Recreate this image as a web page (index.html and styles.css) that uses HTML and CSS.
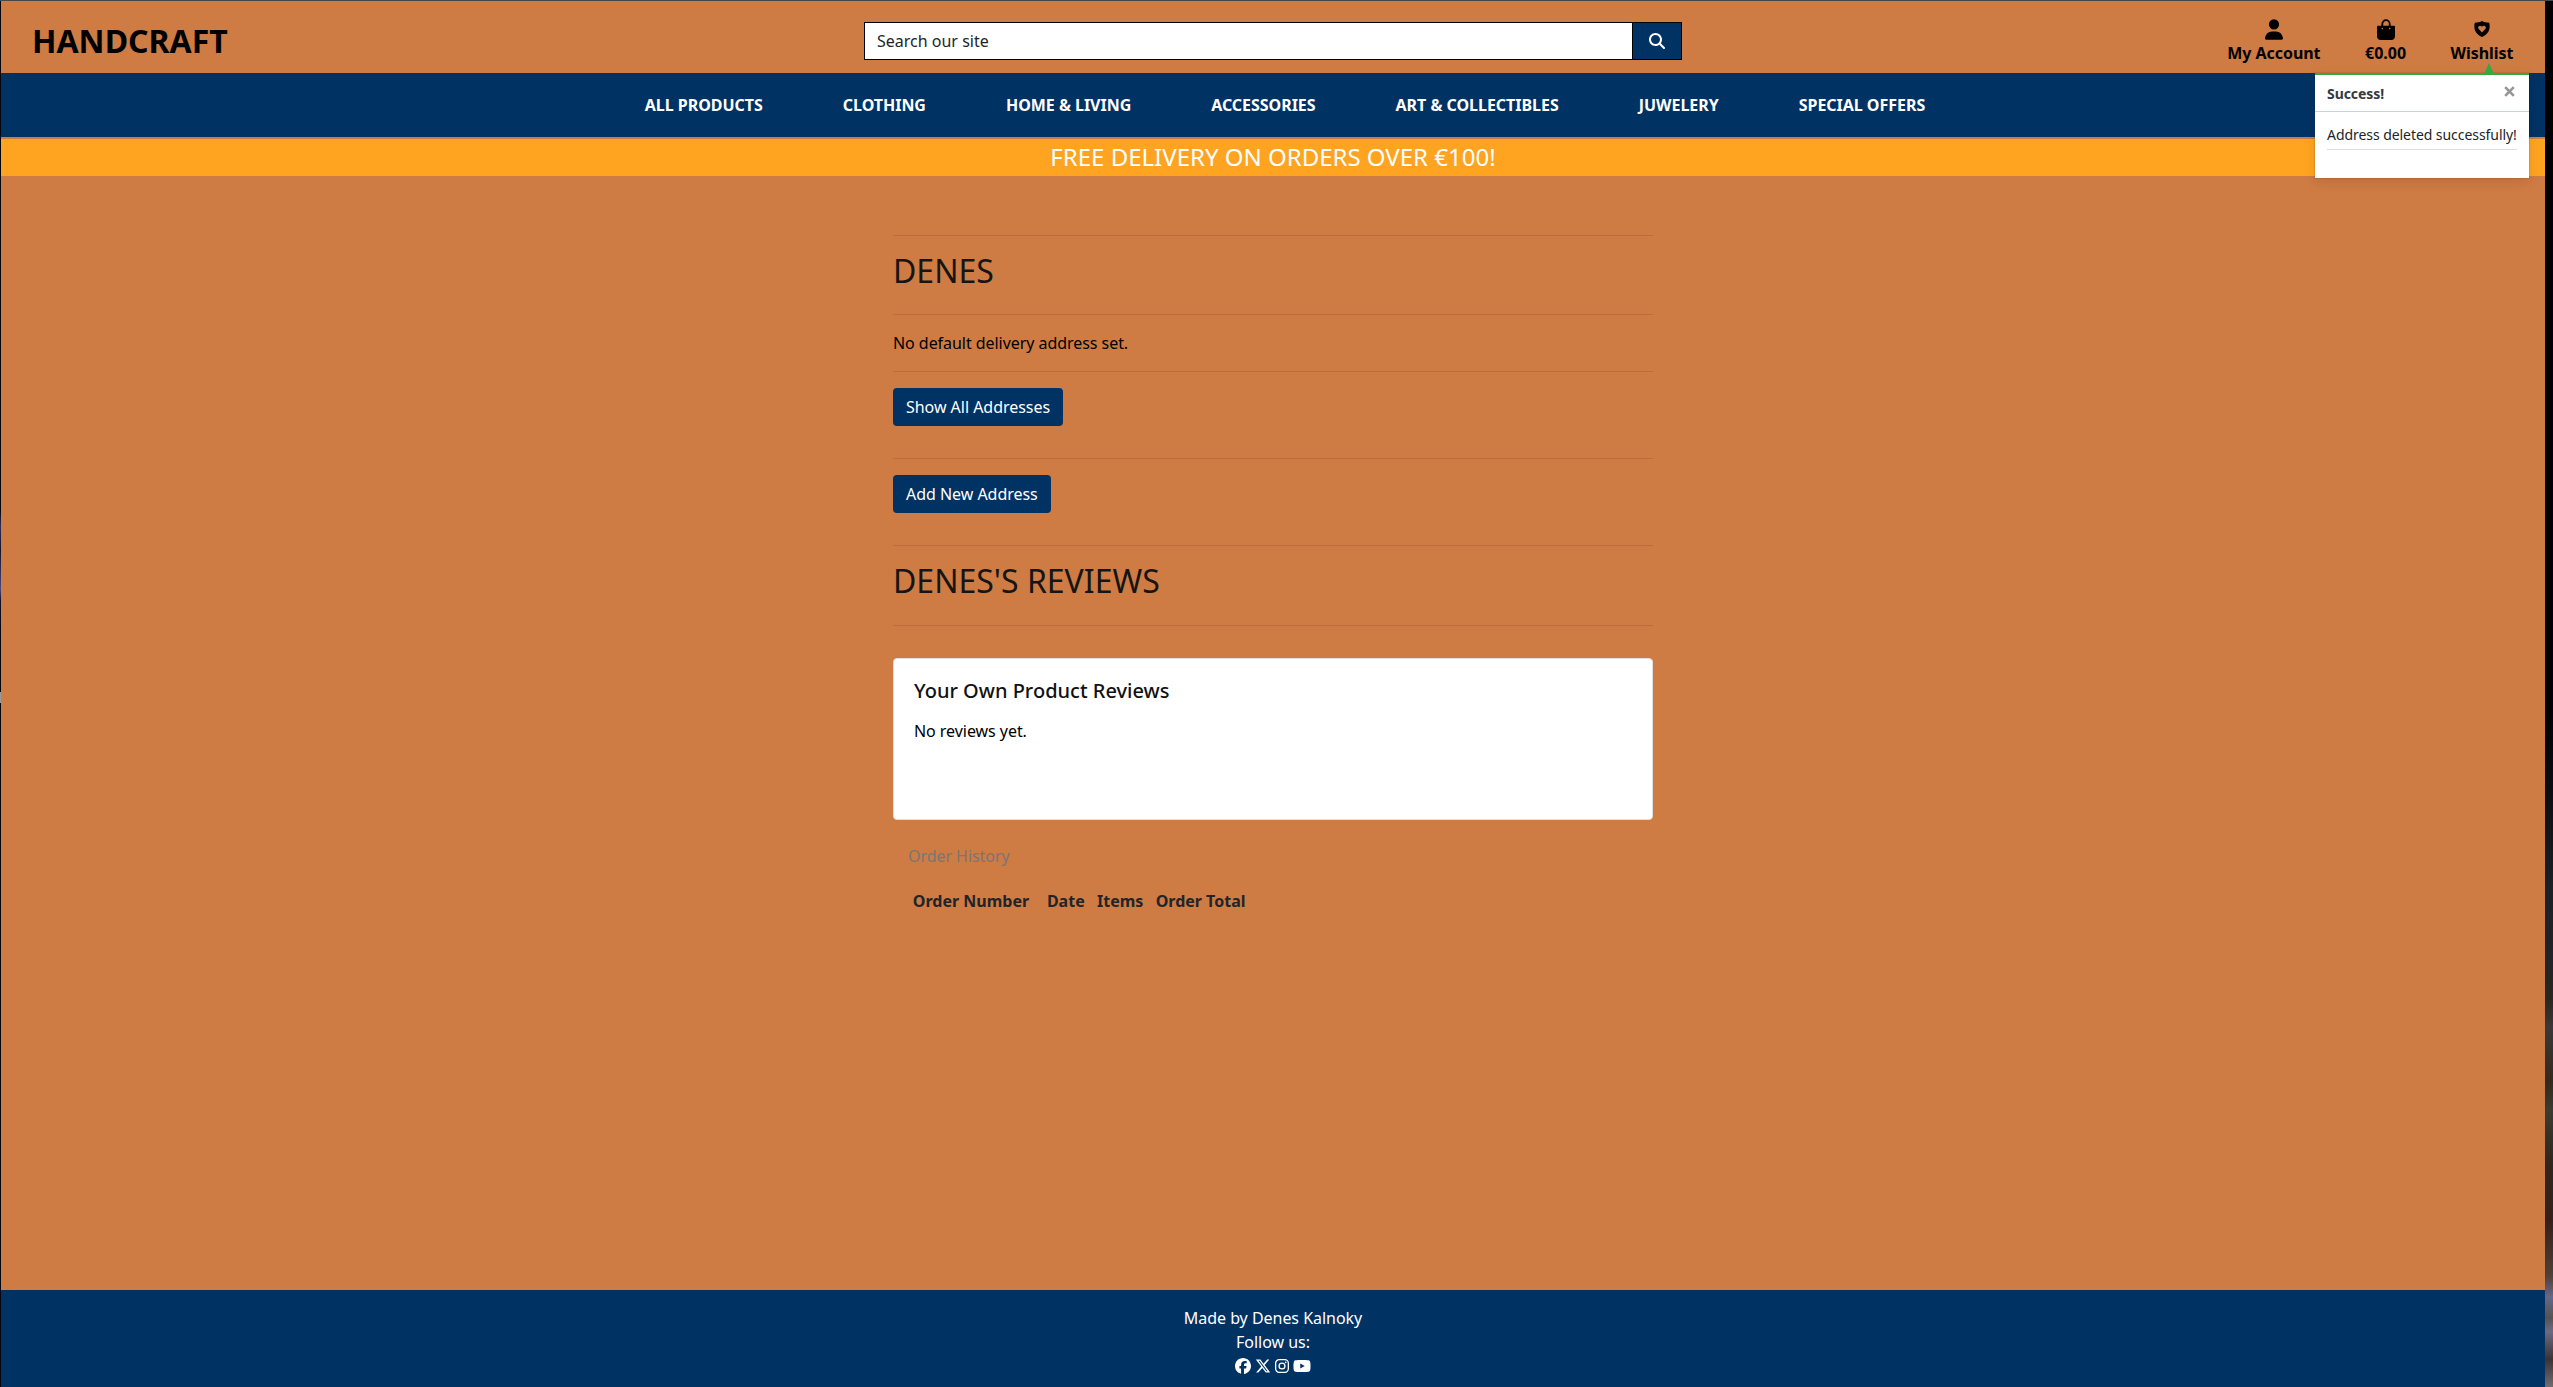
FILE: index.html
```html
<!DOCTYPE html>
<html lang="en">
<head>
<meta charset="utf-8">
<title>Handcraft</title>
<link rel="stylesheet" href="styles.css">
</head>
<body>
<div class="page">
  <header class="topbar">
    <a class="brand">HANDCRAFT</a>
    <form class="search">
      <input class="search-input" type="text" placeholder="Search our site">
      <button class="search-btn" type="button" aria-label="Search">
        <svg viewBox="0 0 512 512" width="16" height="16"><path d="M416 208c0 45.900-14.900 88.300-40 122.700L502.600 457.400c12.500 12.500 12.500 32.800 0 45.300s-32.800 12.500-45.300 0L330.700 376c-34.400 25.200-76.800 40-122.700 40C93.100 416 0 322.900 0 208S93.100 0 208 0S416 93.100 416 208zM208 352a144 144 0 1 0 0-288 144 144 0 1 0 0 288z"/></svg>
      </button>
    </form>
    <div class="links">
      <a class="link"><svg viewBox="0 0 448 512" width="18" height="20"><path d="M224 256A128 128 0 1 0 224 0a128 128 0 1 0 0 256zm-45.700 48C79.800 304 0 383.800 0 482.300C0 498.700 13.300 512 29.700 512H418.300c16.400 0 29.700-13.300 29.700-29.700C448 383.800 368.200 304 269.700 304H178.300z"/></svg><span>My Account</span></a>
      <a class="link"><svg viewBox="0 0 18 21" width="18" height="21"><path d="M5.300 7V4.900a3.700 3.700 0 0 1 7.400 0V7" fill="none" stroke="#000" stroke-width="1.800"/><path fill-rule="evenodd" d="M1 6.800H17a1 1 0 0 1 1 1V17a4 4 0 0 1-4 4H4a4 4 0 0 1-4-4V7.800a1 1 0 0 1 1-1zM5.300 8.800a.8.800 0 1 0 0 1.600.8.800 0 0 0 0-1.600zM12.700 8.800a.8.800 0 1 0 0 1.600.8.800 0 0 0 0-1.600z"/></svg><span>€0.00</span></a>
      <a class="link"><svg class="shield" viewBox="0 0 16 16" width="16" height="16"><path fill-rule="evenodd" d="M8 0C9.500 1 12.500 1.600 15.200 1.700 16.400 7 15.600 12.500 8 16 .4 12.500-.4 7 .8 1.700 3.500 1.600 6.500 1 8 0zM8 11.400l3.300-3.400C13 6 10.200 3.300 8 5.700 5.800 3.300 3 6 4.700 8z"/></svg><span>Wishlist</span></a>
    </div>
    <div class="toast">
      <div class="arrow"></div>
      <div class="toast-head"><strong>Success!</strong><svg viewBox="0 0 11 11" width="11" height="11"><path d="M1.200 1.200L9.800 9.800M9.800 1.200L1.200 9.800" stroke="#949698" stroke-width="2.600"/></svg></div>
      <div class="toast-body"><p>Address deleted successfully!</p></div>
    </div>
  </header>
  <nav class="nav">
    <a>ALL PRODUCTS</a><a>CLOTHING</a><a>HOME &amp; LIVING</a><a>ACCESSORIES</a><a>ART &amp; COLLECTIBLES</a><a>JUWELERY</a><a>SPECIAL OFFERS</a>
  </nav>
  <div class="banner">FREE DELIVERY ON ORDERS OVER €100!</div>
  <main class="profile">
    <hr>
    <h2>DENES</h2>
    <hr>
    <p>No default delivery address set.</p>
    <hr>
    <a class="btn">Show All Addresses</a>
    <hr>
    <a class="btn">Add New Address</a>
    <hr>
    <h2>DENES'S REVIEWS</h2>
    <hr>
    <section class="card">
      <h5>Your Own Product Reviews</h5>
      <p>No reviews yet.</p>
    </section>
    <section class="orders">
      <p class="muted">Order History</p>
      <table><tr><th class="num">Order Number</th><th>Date</th><th>Items</th><th>Order Total</th></tr></table>
    </section>
  </main>
  <footer class="footer">
    <span>Made by Denes Kalnoky</span>
    <span>Follow us:</span>
    <div class="social">
      <svg viewBox="0 0 512 512" width="16" height="16"><path d="M512 256C512 114.600 397.400 0 256 0S0 114.600 0 256C0 376 82.700 476.800 194.200 504.500V334.200H141.400V256h52.800V222.300c0-87.100 39.400-127.500 125-127.500c16.200 0 44.200 3.200 55.700 6.400V172c-6-.6-16.500-1-29.600-1c-42 0-58.200 15.900-58.200 57.200V256h83.600l-14.400 78.200H287V510.100C413.800 494.800 512 386.900 512 256z"/></svg>
      <svg viewBox="0 0 512 512" width="16" height="16"><path d="M389.200 48h70.600L305.600 224.200 487 464H345L233.700 318.600 106.500 464H35.800L200.700 275.500 26.800 48H172.400L272.900 180.900 389.200 48zM364.400 421.800h39.100L151.100 88h-42L364.400 421.800z"/></svg>
      <svg class="outline" viewBox="0 0 14 14" width="14" height="14"><rect x=".65" y=".65" width="12.700" height="12.700" rx="3.500"/><circle cx="7" cy="7" r="2.950"/><circle class="dot" cx="10.700" cy="3.300" r=".85"/></svg>
      <svg viewBox="0 0 576 512" width="18" height="16"><path d="M549.700 124.100c-6.300-23.700-24.800-42.300-48.300-48.600C458.800 64 288 64 288 64S117.200 64 74.600 75.500c-23.500 6.300-42 24.900-48.300 48.600-11.400 42.900-11.400 132.300-11.400 132.300s0 89.400 11.400 132.300c6.300 23.700 24.800 41.500 48.300 47.800C117.200 448 288 448 288 448s170.800 0 213.400-11.500c23.500-6.300 42-24.200 48.300-47.800 11.400-42.900 11.400-132.300 11.400-132.300s0-89.400-11.400-132.300zM232.200 337.600V175.200l142.700 81.200-142.700 81.200z"/></svg>
    </div>
  </footer>
</div>
</body>
</html>
```
FILE: styles.css
```css
* { box-sizing: border-box; }
html { height: 100%; background: #000; }
body {
  margin: 0;
  height: 1387px;
  overflow: hidden;
  border-top: 1px solid #444950;
  padding: 0 8px 0 1px;
  font: 16px/24px "Noto Sans", sans-serif;
  letter-spacing: -0.03px;
  color: #000;
  background:
    linear-gradient(#000, #000 50%, #0c0d10 57%, #1c2027 64%, #202227 68%, #282722 72%, #3a3838 74%, #33291f 78%, #3c3a34 80%, #30251f 84%, #35201c 88%, #4e4039 92%, #66678a 93.500%, #55534f 95%, #6d6a81 96%, #3b3334 98%, #716b70) right 0 / 8px 100% no-repeat,
    linear-gradient(#05060f, #05060f 510px, #30305a 525px, #14152c 550px, #4a4a80 588px, #11122a 600px, #05060f 640px, #05060f 691px, #999 691px, #999 702px, #05060f 702px) left 0 / 1px 100% no-repeat;
}
.page { height: 1386px; display: flex; flex-direction: column; background: #cf7b44; }
.topbar { position: relative; height: 72px; flex: none; display: grid; grid-template-columns: 1fr 818px 1fr; align-items: start; }
.brand { margin: 16px 0 0 31px; font-size: 32px; line-height: 48px; font-weight: 700; letter-spacing: 0; }
.search { margin: 21px 0 0; height: 38px; display: flex; }
.search-input { flex: 1; border: 1px solid #000; padding: 0 12px; font: inherit; color: #212529; background: #fff; border-radius: 0; }
.search-input::placeholder { color: #212529; opacity: 1; }
.search-btn { width: 49px; border: 1px solid #000; border-left: 0; padding: 0; background: #003264; display: flex; align-items: center; justify-content: center; }
.search-btn svg, .social svg { fill: #fff; }
.links { display: flex; justify-content: flex-end; gap: 44.500px; padding: 18px 31.500px 0 0; font-weight: 700; }
.link { display: flex; flex-direction: column; align-items: center; }
.link svg { height: 21px; margin-bottom: 1px; }
.link .shield { height: 16px; margin: 2px 0 4px; }

.toast { position: absolute; z-index: 2; top: 72px; left: 2314px; width: 214px; height: 105px; border-top: 2px solid #32a846; background: #fff; box-shadow: 0 4px 12px rgba(0,0,0,.1), 0 0 0 1px rgba(0,0,0,.08); font-size: 14px; line-height: 21px; letter-spacing: -0.06px; color: #212529; }
.arrow { position: absolute; top: -12px; left: 169px; border: solid transparent; border-width: 0 5px 11px; border-bottom-color: #32a846; }
.toast-head { display: flex; justify-content: space-between; height: 37px; padding: 8px 14px 0 12px; border-bottom: 1px solid #ccd0d8; color: #343a40; }
.toast-head svg { margin-top: 3px; }
.toast-body { padding: 12px 12px 0; }
.toast-body p { margin: 0; height: 26px; border-bottom: 1px solid #dee0e2; white-space: nowrap; }

.nav { height: 64px; flex: none; display: flex; justify-content: center; align-items: center; gap: 80px; padding-left: 24px; background: #003264; color: #fff; font-weight: 700; }
.banner { margin-top: 2px; height: 37px; flex: none; background: #ffa420; color: #fff; text-align: center; font-size: 24px; line-height: 35px; letter-spacing: 0; }

.profile { width: 760px; margin: 59px auto 0; flex: 1; }
.profile hr { margin: 16px 0; border: 0; border-top: 1px solid #b96f3c; }
.profile > hr:first-child { margin-top: 0; }
h2 { margin: 0 0 24px; font-size: 32px; line-height: 38.400px; font-weight: 400; letter-spacing: 0; color: #151515; }
.profile p { margin: 0 0 16px; letter-spacing: -0.05px; }
.btn { display: block; width: fit-content; height: 38px; margin-bottom: 32px; padding: 7px 13px; border-radius: 4px; background: #003264; color: #fff; }
.profile .card { height: 162px; margin-top: 32px; padding: 20px; border: 1px solid #dfdfdf; border-radius: 4px; background: #fff; }
h5 { margin: 0 0 16px; font-size: 20px; line-height: 24px; font-weight: 500; letter-spacing: 0; color: #111; }
.orders { padding: 24px 15px 0; }
.profile .muted { color: #7c7572; margin-bottom: 16px; }
table { border-collapse: collapse; color: #212529; letter-spacing: 0; }
th { padding: 5px 7.500px 5px 4.800px; text-align: left; font-weight: 700; }
th.num { padding-right: 13px; }

.footer { height: 97px; flex: none; display: flex; flex-direction: column; align-items: center; padding-top: 16px; background: #003264; color: #fff; }
.social { display: flex; align-items: center; height: 24px; gap: 4px; }
.social .outline { fill: none; stroke: #fff; stroke-width: 1.300; }
.social .dot { fill: #fff; stroke: none; }
```
